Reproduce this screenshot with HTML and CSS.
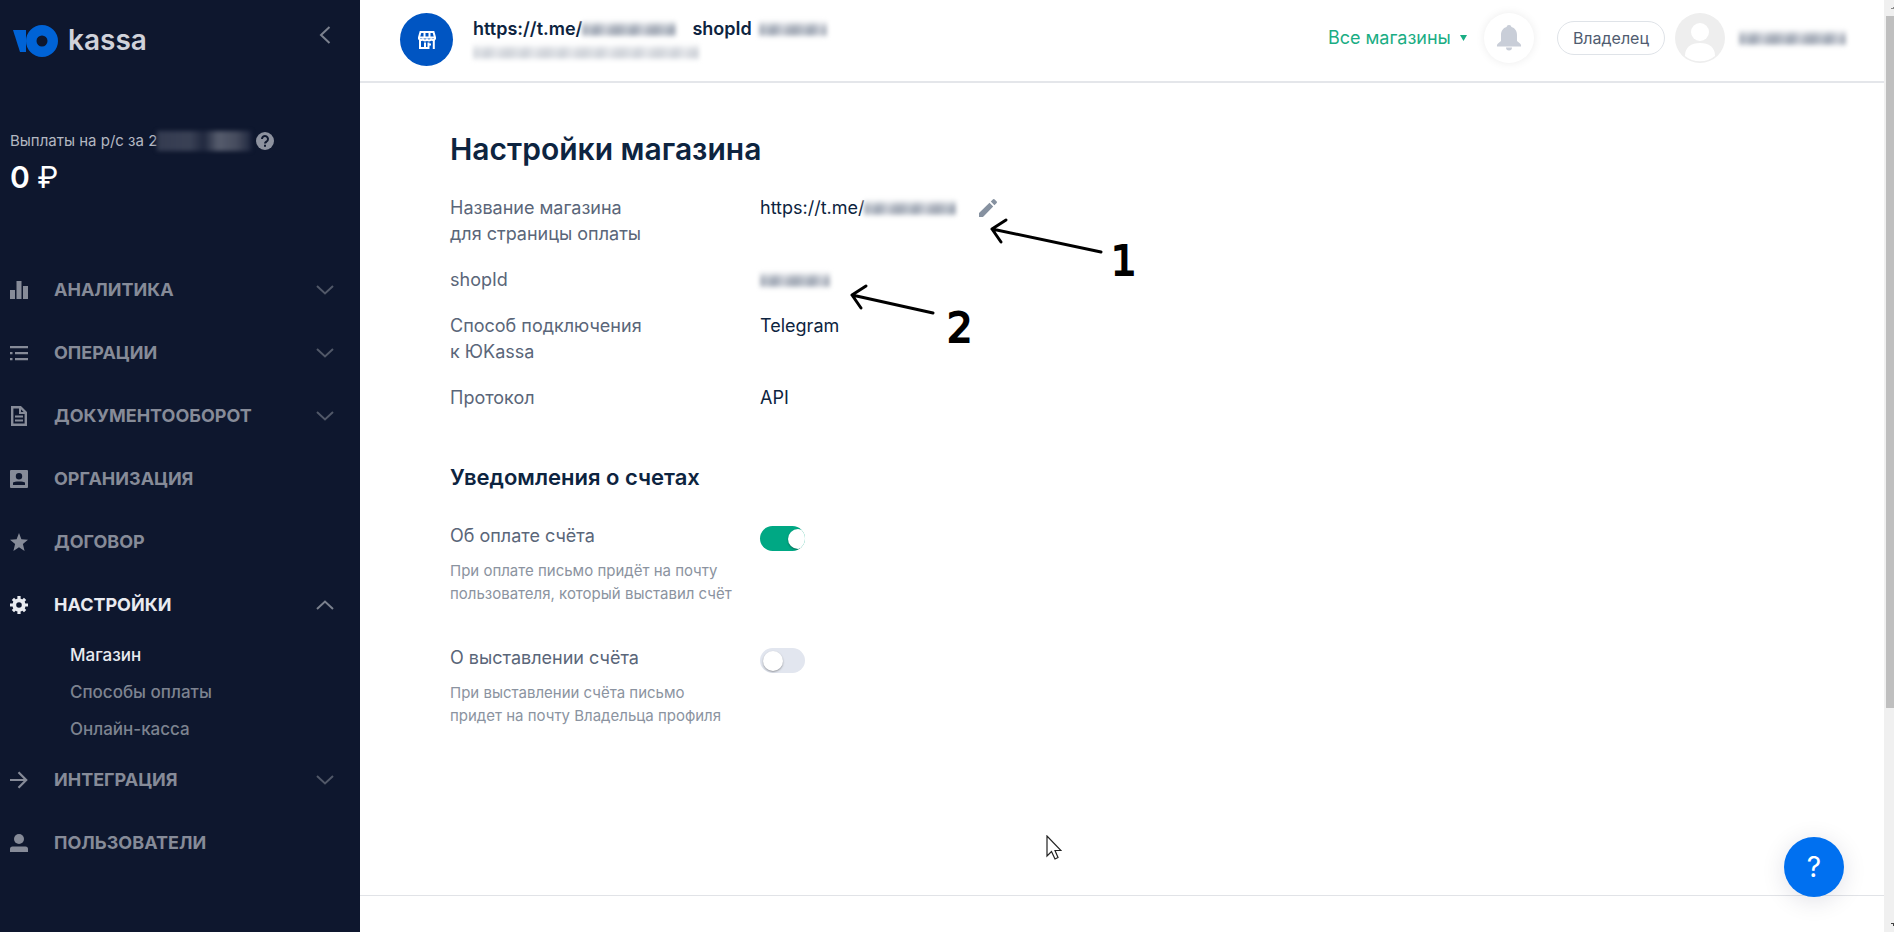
FILE: index.html
```html
<!DOCTYPE html>
<html lang="ru">
<head>
<meta charset="utf-8">
<meta name="viewport" content="width=device-width, initial-scale=1">
<title>Настройки магазина</title>
<link rel="stylesheet" href="styles.css">
</head>
<body>
<div class="app">
  <aside class="sidebar">
    <div class="brand">
      <a class="logo" href="#" aria-label="ЮKassa">
        <svg width="46" height="34" viewBox="0 0 46 34" fill="#0063d6"><path d="M0 6h13v22H7z"/><path fill-rule="evenodd" d="M29 1a16 16 0 1 0 0 32a16 16 0 0 0 0-32zm0 10.500a5.500 5.500 0 1 1 0 11a5.500 5.500 0 0 1 0-11z"/></svg>
        <span class="logo-text">kassa</span>
      </a>
      <button class="icon-btn collapse" aria-label="Свернуть меню">
        <svg width="12" height="18" viewBox="0 0 12 18" fill="none" stroke="currentColor" stroke-width="2"><path d="M10.500 1L2 9l8.500 8"/></svg>
      </button>
    </div>
    <div class="payout">
      <div class="payout-label">
        <span>Выплаты на р/с за 2</span><span class="mask mask-payout"></span>
        <button class="icon-btn hint-btn" aria-label="Подсказка">
          <svg width="18" height="18" viewBox="0 0 18 18"><circle cx="9" cy="9" r="9" fill="#8d929f"/><path d="M6 7a3 3 0 1 1 4.600 2.500C9.500 10.300 9 10.600 9 11.600" fill="none" stroke="#0e172e" stroke-width="2"/><path d="M8 12.800h2v2H8z" fill="#0e172e"/></svg>
        </button>
      </div>
      <div class="payout-sum">0 <span class="ruble">₽</span></div>
    </div>
    <nav class="nav">
      <button class="nav-item">
        <svg class="nav-icon" viewBox="0 0 18 18" fill="currentColor"><path d="M0 9h5v9H0zM6.500 0h5v18h-5zM13 5h5v13h-5z"/></svg>
        <span class="nav-text">Аналитика</span>
        <svg class="chev" viewBox="0 0 18 10"><path d="M1 1l8 7.500L17 1"/></svg>
      </button>
      <button class="nav-item">
        <svg class="nav-icon" viewBox="0 0 18 18" fill="currentColor"><path d="M0 2h18v2.200H0zM0 8h2.500v2.200H0zM5 8h13v2.200H5zM0 14h2.500v2.200H0zM5 14h13v2.200H5z"/></svg>
        <span class="nav-text">Операции</span>
        <svg class="chev" viewBox="0 0 18 10"><path d="M1 1l8 7.500L17 1"/></svg>
      </button>
      <button class="nav-item">
        <svg class="nav-icon" viewBox="0 0 18 20" fill="none" stroke="currentColor" stroke-width="2.400"><path d="M2.200 1.200h8.300l5.300 5.300v12.300H2.200z"/><path d="M10 1v6h6M5 10.500h8M5 14.500h8" stroke-width="2"/></svg>
        <span class="nav-text">Документооборот</span>
        <svg class="chev" viewBox="0 0 18 10"><path d="M1 1l8 7.500L17 1"/></svg>
      </button>
      <a class="nav-item" href="#">
        <svg class="nav-icon" viewBox="0 0 18 18" fill="currentColor"><path fill-rule="evenodd" d="M1 0h16a1 1 0 0 1 1 1v16a1 1 0 0 1-1 1H1a1 1 0 0 1-1-1V1a1 1 0 0 1 1-1zm8 3a3.200 3.200 0 1 0 0 6.400A3.200 3.200 0 0 0 9 3zM3 12.500V15h12v-2.500c-1-1.500-11-1.500-12 0z"/></svg>
        <span class="nav-text">Организация</span>
      </a>
      <a class="nav-item" href="#">
        <svg class="nav-icon" viewBox="0 0 18 18" fill="currentColor"><path d="M9 0l2.400 6.300 6.600.500-5.100 4.300L14.600 18 9 14.300 3.400 18l1.700-6.900L0 6.800l6.600-.5z"/></svg>
        <span class="nav-text">Договор</span>
      </a>
      <button class="nav-item active" aria-expanded="true">
        <svg class="nav-icon" viewBox="0 0 18 18"><circle cx="9" cy="9" r="4.700" fill="none" stroke="currentColor" stroke-width="3.800"/><path d="M9 0v3.500M9 14.500V18M0 9h3.500M14.500 9H18M2.900 2.900l2 2M13.100 13.100l2 2M2.900 15.100l2-2M13.100 4.900l2-2" stroke="currentColor" stroke-width="3.200"/></svg>
        <span class="nav-text">Настройки</span>
        <svg class="chev" viewBox="0 0 18 10"><path d="M1 9l8-7.500L17 9"/></svg>
      </button>
      <div class="subnav">
        <a class="subnav-item current" href="#">Магазин</a>
        <a class="subnav-item" href="#">Способы оплаты</a>
        <a class="subnav-item" href="#">Онлайн-касса</a>
      </div>
      <button class="nav-item">
        <svg class="nav-icon" viewBox="0 0 18 18" fill="none" stroke="currentColor" stroke-width="2.200"><path d="M0 9h16M8.500 1.300L16.200 9l-7.700 7.700"/></svg>
        <span class="nav-text">Интеграция</span>
        <svg class="chev" viewBox="0 0 18 10"><path d="M1 1l8 7.500L17 1"/></svg>
      </button>
      <a class="nav-item" href="#">
        <svg class="nav-icon" viewBox="0 0 18 18" fill="currentColor"><circle cx="9" cy="5" r="5"/><path d="M0 18v-3a2.500 2.500 0 0 1 2.500-2.500h13A2.500 2.500 0 0 1 18 15v3z"/></svg>
        <span class="nav-text">Пользователи</span>
      </a>
    </nav>
  </aside>

  <div class="page">
    <header class="topbar">
      <span class="shop-badge">
        <svg width="18" height="18" viewBox="0 0 18 18" fill="none" stroke="#fff" stroke-width="2"><path d="M2.500 1h13L17 6.500H1zM6.500 1v6M11.500 1v6M2 8v9h8.500V11.500M15.800 8v10M7 11.500v5M10.500 13.500h2.500"/><path d="M1 6.500a2 2 0 0 0 4 1a2 2 0 0 0 4 0a2 2 0 0 0 4 0a2 2 0 0 0 4-1"/></svg>
      </span>
      <div class="shop-info">
        <div class="shop-line"><span>https://t.me/</span><span class="mask mask-name"></span><span class="shop-id">shopId</span><span class="mask mask-id"></span></div>
        <span class="mask mask-sub"></span>
      </div>
      <div class="account">
        <button class="shops-btn">Все магазины <svg width="7" height="6" viewBox="0 0 7 6" fill="currentColor"><path d="M0 0h7L3.500 6z"/></svg></button>
        <button class="bell" aria-label="Уведомления">
          <svg width="26" height="26" viewBox="0 0 26 26" fill="#c9ced8"><path d="M13 0a2.500 2.500 0 0 1 2.500 2C19 3 21 6 21 10v6l3 2.500a3 3 0 0 1 1 3H1a3 3 0 0 1 1-3L5 16v-6c0-4 2-7 5.500-8A2.500 2.500 0 0 1 13 0zM10 22.500h6a3 3 0 0 1-6 0z"/></svg>
        </button>
        <span class="role">Владелец</span>
        <svg class="avatar" viewBox="0 0 50 50"><circle cx="25" cy="25" r="25" fill="#eee"/><circle cx="25" cy="19" r="9" fill="#fff"/><path d="M10 43c0-9 6-13 15-13s15 4 15 13c-8 7-22 7-30 0z" fill="#fff"/></svg>
        <span class="mask mask-user"></span>
      </div>
    </header>

    <main class="content">
      <h1 class="title">Настройки магазина</h1>
      <dl class="details">
        <dt>Название магазина<br>для страницы оплаты</dt>
        <dd><span>https://t.me/</span><span class="mask mask-link"></span>
          <button class="icon-btn edit" aria-label="Изменить название">
            <svg width="18" height="18" viewBox="0 0 18 18" fill="#8691a0"><path d="M0 18v-4L10.500 3.800l3.700 3.700L4 18zM11.800 2.600L14.100.300a1 1 0 0 1 1.300 0l2.300 2.300a1 1 0 0 1 0 1.300l-2.300 2.300z"/></svg>
          </button>
        </dd>
        <dt>shopId</dt>
        <dd><span class="mask mask-value"></span></dd>
        <dt>Способ подключения<br>к ЮKassa</dt>
        <dd>Telegram</dd>
        <dt>Протокол</dt>
        <dd>API</dd>
        <dd class="notes">
          <svg class="arrows" viewBox="0 0 310 160"><path d="M261 57L152 34M166 25L152 34l9 13M93 118L12 100M26 91L12 100l9 13"/></svg>
          <span class="note note-1">1</span>
          <span class="note note-2">2</span>
        </dd>
      </dl>

      <h2 class="subtitle">Уведомления о счетах</h2>
      <div class="options">
        <div class="option">
          <div class="option-text">
            <label for="paid">Об оплате счёта</label>
            <p class="hint">При оплате письмо придёт на почту<br>пользователя, который выставил счёт</p>
          </div>
          <input class="toggle" type="checkbox" id="paid" checked>
        </div>
        <div class="option">
          <div class="option-text">
            <label for="issued">О выставлении счёта</label>
            <p class="hint">При выставлении счёта письмо<br>придет на почту Владельца профиля</p>
          </div>
          <input class="toggle" type="checkbox" id="issued">
        </div>
      </div>
    </main>
    <footer class="footer"></footer>
    <button class="help" aria-label="Помощь">?</button>
    <svg class="cursor" viewBox="0 0 16 25"><path d="M1 1v20l4.500-4.500L9 24l3-1.500L9 15.500h6z" fill="#fff" stroke="#222" stroke-width="1.200"/></svg>
  </div>

  <div class="scroll">
    <span class="scroll-arrow up"></span>
    <span class="scroll-thumb"></span>
    <span class="scroll-rest"></span>
    <span class="scroll-arrow down"></span>
  </div>
</div>
</body>
</html>
```
FILE: styles.css
```css
* { box-sizing: border-box; }
body {
  margin: 0;
  font-family: Inter, "Noto Sans", sans-serif;
  font-size: 18px;
  line-height: 26px;
  color: #0d2440;
  background: #fff;
}
button {
  font: inherit;
  color: inherit;
  background: none;
  border: 0;
  padding: 0;
}
a { color: inherit; text-decoration: none; }
svg { display: block; flex: none; }

.app {
  display: grid;
  grid-template-columns: 360px 1fr 10px;
  min-height: 100vh;
}

/* Sidebar */
.sidebar { background: #0e172e; color: #868b98; }
.brand {
  display: flex;
  justify-content: space-between;
  align-items: flex-start;
  padding: 24px 29px 0 13px;
}
.logo { display: flex; gap: 9px; }
.logo-text {
  font-size: 28px;
  font-weight: 600;
  line-height: 32px;
  color: #d0d2da;
}
.collapse { padding-top: 2px; color: #7b818e; }
.payout { padding: 70px 10px 0; }
.payout-label {
  display: flex;
  align-items: center;
  font-size: 15px;
  color: #b4b8c2;
}
.hint-btn { margin-left: 5px; }
.payout-sum {
  padding-top: 3px;
  font-size: 30px;
  line-height: 40px;
  font-weight: 600;
  color: #fff;
}
.ruble { font-weight: 400; }
.nav {
  display: flex;
  flex-direction: column;
  padding: 61px 26px 0 10px;
}
.nav-item {
  display: flex;
  align-items: center;
  height: 63px;
  text-align: left;
  font-weight: 700;
  text-transform: uppercase;
}
.nav-icon { width: 18px; height: 20px; margin-right: 26px; }
.nav-text { flex: 1; }
.chev {
  width: 18px;
  height: 10px;
  fill: none;
  stroke: #515868;
  stroke-width: 2;
}
.nav-item.active { color: #e9ebf0; }
.active .chev { stroke: #7b818e; }
.subnav { display: flex; flex-direction: column; padding: 1px 0 0 60px; }
.subnav-item { font-size: 17px; line-height: 37px; color: #7d8390; font-weight: 500; }
.subnav-item.current { color: #e9ebf0; }

/* Main column */
.page { position: relative; display: flex; flex-direction: column; }
.topbar {
  display: flex;
  align-items: flex-start;
  height: 83px;
  padding: 13px 38px 0 40px;
  border-bottom: 2px solid #e4e6ea;
}
.shop-badge {
  display: grid;
  place-items: center;
  width: 53px;
  height: 53px;
  border-radius: 50%;
  background: #0055c2;
}
.shop-info { padding: 3px 0 0 20px; }
.shop-line { display: flex; align-items: center; font-weight: 600; }
.shop-id { margin: 0 7px 0 16px; }
.account { display: flex; align-items: center; margin-left: auto; }
.shops-btn { display: flex; align-items: center; gap: 9px; color: #1aad84; }
.bell {
  display: grid;
  place-items: center;
  width: 50px;
  height: 50px;
  margin-left: 17px;
  border-radius: 50%;
  box-shadow: 0 0 10px rgba(0, 0, 0, 0.08);
}
.role {
  margin-left: 23px;
  padding: 3px 15px;
  border: 1px solid #dfe3e8;
  border-radius: 17px;
  font-size: 16px;
  color: #505c70;
}
.avatar { width: 50px; height: 50px; margin: 0 14px 0 10px; }

/* Obscured values */
.mask {
  display: block;
  height: 18px;
  background:
    linear-gradient(#fff, transparent 45%, transparent 75%, #fff),
    repeating-linear-gradient(100deg, #a3aab6 0, #bcc2cb 9px, #9fa7b4 16px, #c9cdd5 25px, #adb3be 31px, #a3aab6 37px);
  filter: blur(2px);
}
.mask-payout {
  width: 94px;
  height: 20px;
  background: linear-gradient(90deg, #343b50, #3a4155 35%, #20283e 50%, #565c6d 65%, #454b5d 85%, #202840);
}
.mask-name { width: 94px; }
.mask-id { width: 68px; }
.mask-sub { width: 226px; margin-top: 1px; opacity: 0.5; }
.mask-user { width: 107px; }
.mask-link { width: 92px; }
.mask-value { width: 70px; }

/* Store settings */
.content { flex: 1; padding: 46px 90px; }
.title { margin: 0 0 26px; font-size: 30px; line-height: 40px; font-weight: 600; }
.details {
  position: relative;
  display: grid;
  grid-template-columns: 310px 1fr;
  row-gap: 20px;
  margin: 0;
}
.details dt { color: #5a6679; }
.details dd { display: flex; align-items: center; align-self: start; min-height: 26px; margin: 0; }
.edit { margin-left: 23px; }
.details .notes {
  position: absolute;
  top: 0;
  left: 390px;
  display: block;
  width: 310px;
  height: 160px;
  pointer-events: none;
}
.arrows { fill: none; stroke: #000; stroke-width: 3; stroke-linecap: round; stroke-linejoin: round; }
.note {
  position: absolute;
  font-family: "DejaVu Sans", sans-serif;
  font-size: 40px;
  line-height: 48px;
  color: #000;
  -webkit-text-stroke: 2px #000;
}
.note-1 { left: 271px; top: 42px; }
.note-2 { left: 107px; top: 109px; }

.subtitle { margin: 52px 0 32px; font-size: 22px; line-height: 28px; font-weight: 600; }
.options { display: grid; gap: 40px; }
.option {
  display: grid;
  grid-template-columns: 310px 1fr;
  color: #5a6679;
}
.hint { margin: 10px 0 0; font-size: 15px; line-height: 23px; color: #8b93a0; white-space: nowrap; }
.toggle {
  appearance: none;
  display: flex;
  align-items: center;
  width: 45px;
  height: 25px;
  margin: 3px 0 0;
  padding: 0 3px;
  overflow: hidden;
  border-radius: 13px;
  background: #e2e6ef;
}
.toggle::before {
  content: "";
  width: 20px;
  height: 20px;
  flex: none;
  border-radius: 50%;
  background: #fff;
  box-shadow: 0 1px 2px rgba(0, 0, 0, 0.35);
}
.toggle:checked { background: #00a884; }
.toggle:checked::before { margin-left: 25px; }

.footer { height: 37px; border-top: 1px solid #e1e3e7; }
.help {
  position: absolute;
  right: 40px;
  bottom: 35px;
  width: 60px;
  height: 60px;
  border-radius: 50%;
  background: #0070f0;
  color: #fff;
  font-size: 28px;
  box-shadow: 0 4px 24px rgba(0, 20, 60, 0.12);
}
.cursor { position: absolute; left: 686px; top: 835px; width: 16px; height: 25px; }

/* Scroll track */
.scroll { display: flex; flex-direction: column; background: #f0f0f0; overflow: hidden; }
.scroll-thumb { flex: 692; margin-left: 2px; background: #bfbfbf; }
.scroll-rest { flex: 208; }
.scroll-arrow { width: 10px; height: 16px; }
.up { background: linear-gradient(135deg, transparent 60%, #8a8a8a 60%) 6px 4px / 5px 5px no-repeat; }
.down { background: linear-gradient(45deg, transparent 60%, #404040 60%) 6px 7px / 5px 5px no-repeat; }
```
